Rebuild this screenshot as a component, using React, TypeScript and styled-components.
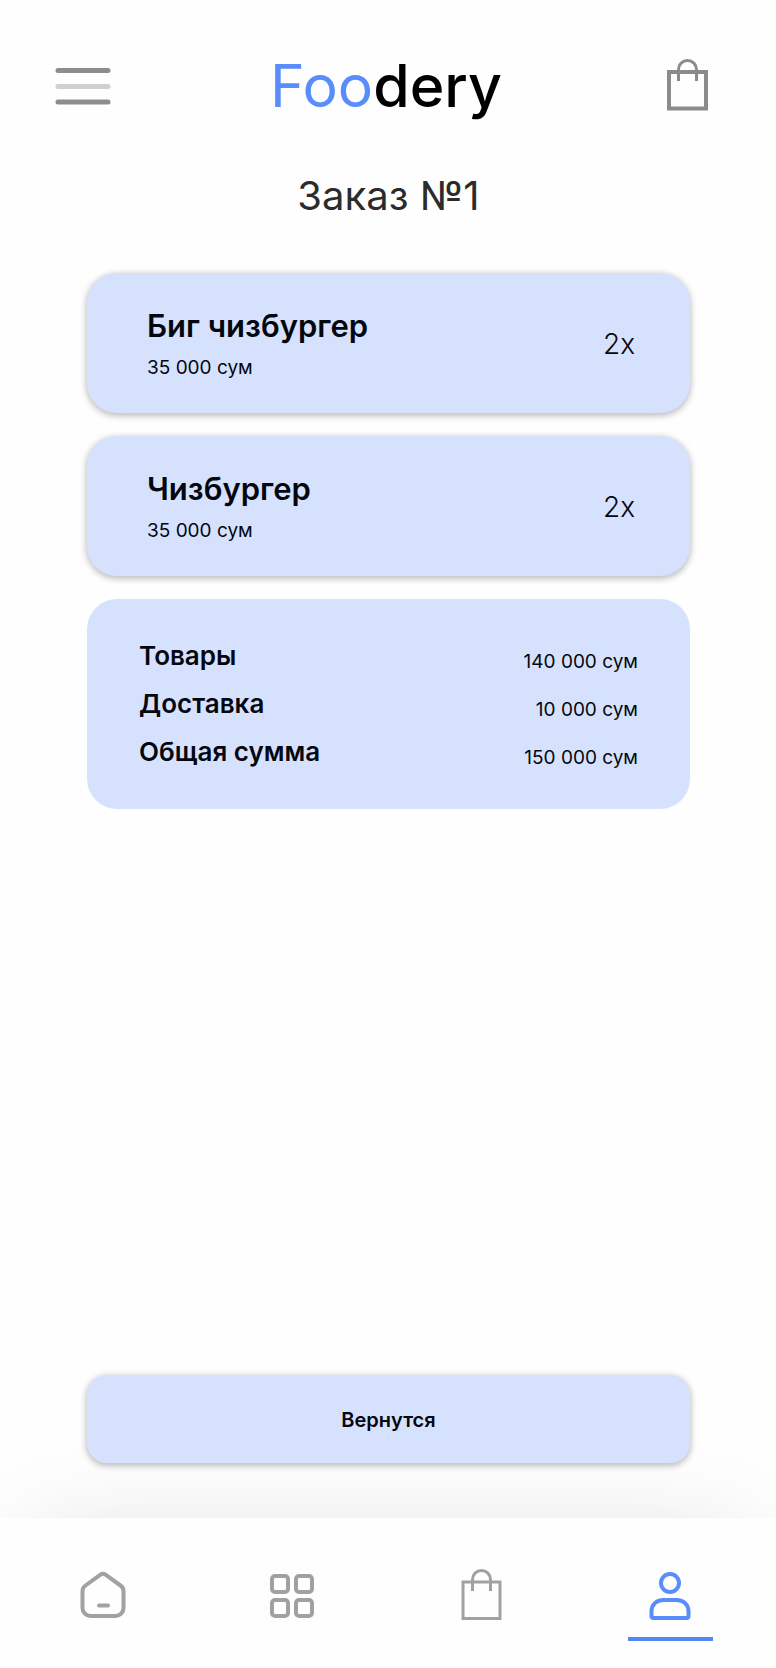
import React from 'react';
import styled, { createGlobalStyle } from 'styled-components';

const GlobalStyle = createGlobalStyle`
  * { box-sizing: border-box; }
  body {
    margin: 0;
    background: #fefefe;
    color: #05070f;
    font-family: Inter, "Noto Sans", sans-serif;
  }
`;

const Page = styled.div`
  display: flex;
  flex-direction: column;
  min-height: 100vh;
`;

const Header = styled.header`
  display: flex;
  align-items: center;
  justify-content: space-between;
  height: 172px;
  padding: 0 58px 0 52px;
`;

const IconButton = styled.button`
  display: flex;
  padding: 0;
  border: 0;
  background: none;
  color: #8b8b8b;
  cursor: pointer;
`;

const Logo = styled.a`
  color: #000;
  font-size: 59px;
  font-weight: 500;
  line-height: 72px;
  text-decoration: none;
`;

const LogoAccent = styled.span`
  color: #588dfb;
  font-weight: 400;
`;

const Main = styled.main`
  display: flex;
  flex: 1;
  flex-direction: column;
  padding: 0 86px 55px 87px;
`;

const Title = styled.h1`
  margin: 0 0 53px;
  color: #2b2b2b;
  font-size: 40px;
  font-weight: 400;
  line-height: 48px;
  text-align: center;
`;

const OrderList = styled.ul`
  display: flex;
  flex-direction: column;
  gap: 23px;
  margin: 0 0 23px;
  padding: 0;
  list-style: none;
`;

const OrderCard = styled.li`
  display: flex;
  align-items: center;
  justify-content: space-between;
  height: 140px;
  padding: 2px 55px 0 60px;
  border-radius: 30px;
  background: #d6e2fd;
  box-shadow: 0 2px 6px 1px rgba(0, 0, 0, 0.25);
`;

const ItemName = styled.h2`
  margin: 0 0 12px;
  font-size: 31px;
  font-weight: 600;
  line-height: 36px;
`;

const Price = styled.p`
  margin: 0;
  font-size: 19px;
  line-height: 24px;
`;

const Quantity = styled.span`
  font-size: 28px;
  font-weight: 300;
  line-height: 36px;
`;

const Summary = styled.dl`
  display: flex;
  flex-direction: column;
  gap: 12px;
  margin: 0 0 auto;
  padding: 39px 52px;
  border-radius: 30px;
  background: #d6e2fd;
`;

const SummaryRow = styled.div`
  display: flex;
  align-items: flex-end;
  justify-content: space-between;
  height: 36px;
`;

const SummaryLabel = styled.dt`
  font-size: 26px;
  font-weight: 600;
  line-height: 36px;
`;

const SummaryValue = styled.dd`
  margin: 0;
  font-size: 19px;
  line-height: 24px;
`;

const BackButton = styled.button`
  position: relative;
  z-index: 1;
  height: 88px;
  padding: 2px 0 0;
  border: 0;
  border-radius: 20px;
  background: #d6e2fd;
  box-shadow: 0 2px 6px 1px rgba(0, 0, 0, 0.25);
  color: inherit;
  font-family: inherit;
  font-size: 20px;
  font-weight: 600;
  line-height: 24px;
  cursor: pointer;
`;

const TabBar = styled.nav`
  display: flex;
  height: 150px;
  padding: 0 11px 0 9px;
  background: #fefefe;
  box-shadow: 0 -10px 100px -30px rgba(0, 0, 0, 0.13);
`;

const Tab = styled.a<{ $active?: boolean }>`
  display: flex;
  flex: 1;
  flex-direction: column;
  align-items: center;
  padding-top: 48px;
  color: ${({ $active }) => ($active ? '#588dfb' : '#a1a1a1')};

  &::after {
    width: 85px;
    height: 4px;
    margin-top: 11px;
    background: ${({ $active }) => ($active ? '#5288f0' : 'transparent')};
    content: '';
  }
`;

const BagIcon = ({ stroke = 3 }: { stroke?: number }) => (
  <svg width="60" height="60" viewBox="0 0 60 60" fill="none" stroke="currentColor" aria-hidden="true">
    <path d="M11 16h37v36.500h-37z" strokeWidth={stroke} />
    <path d="M20.500 25V13.500a9 9 0 0 1 18 0V25" strokeWidth="3" />
  </svg>
);

const MenuIcon = () => (
  <svg width="62" height="60" viewBox="0 0 62 60" fill="none" strokeLinecap="round" strokeWidth="5" aria-hidden="true">
    <path d="M6 14.5h50M6 46h50" stroke="#8d8d8d" />
    <path d="M6 30.5h50" stroke="#d0d0d0" />
  </svg>
);

const HomeIcon = () => (
  <svg width="60" height="60" viewBox="0 0 60 60" fill="none" stroke="currentColor" strokeWidth="4" strokeLinecap="round" strokeLinejoin="round" aria-hidden="true">
    <path d="M26.5 8.6 11.500 19.500a7 7 0 0 0-3 6V42a8 8 0 0 0 8 8h25a8 8 0 0 0 8-8V25.500a7 7 0 0 0-3-6L31.500 8.600a4.500 4.500 0 0 0-5 0z" />
    <path d="M25 39.500h9" />
  </svg>
);

const GridIcon = () => (
  <svg width="60" height="60" viewBox="0 0 60 60" fill="none" stroke="currentColor" strokeWidth="4" aria-hidden="true">
    <rect x="9" y="10" width="16" height="16" rx="3" />
    <rect x="33" y="10" width="16" height="16" rx="3" />
    <rect x="9" y="34" width="16" height="16" rx="3" />
    <rect x="33" y="34" width="16" height="16" rx="3" />
  </svg>
);

const UserIcon = () => (
  <svg width="60" height="60" viewBox="0 0 60 60" fill="none" stroke="currentColor" strokeWidth="4" aria-hidden="true">
    <circle cx="29" cy="17" r="9" />
    <path d="M10.500 45.500c0-7 5-11.500 12-11.500h13c7 0 12 4.500 12 11.500V50a2 2 0 0 1-2 2h-33a2 2 0 0 1-2-2z" />
  </svg>
);

const items = [
  { name: 'Биг чизбургер', price: '35 000 сум', quantity: '2x' },
  { name: 'Чизбургер', price: '35 000 сум', quantity: '2x' },
];

const totals = [
  { label: 'Товары', value: '140 000 сум' },
  { label: 'Доставка', value: '10 000 сум' },
  { label: 'Общая сумма', value: '150 000 сум' },
];

export default function App() {
  return (
    <Page>
      <GlobalStyle />
      <Header>
        <IconButton type="button" aria-label="Меню">
          <MenuIcon />
        </IconButton>
        <Logo href="#home">
          <LogoAccent>Foo</LogoAccent>dery
        </Logo>
        <IconButton type="button" aria-label="Корзина">
          <BagIcon stroke={4} />
        </IconButton>
      </Header>
      <Main>
        <Title>Заказ №1</Title>
        <OrderList>
          {items.map((item) => (
            <OrderCard key={item.name}>
              <div>
                <ItemName>{item.name}</ItemName>
                <Price>{item.price}</Price>
              </div>
              <Quantity>{item.quantity}</Quantity>
            </OrderCard>
          ))}
        </OrderList>
        <Summary>
          {totals.map((row) => (
            <SummaryRow key={row.label}>
              <SummaryLabel>{row.label}</SummaryLabel>
              <SummaryValue>{row.value}</SummaryValue>
            </SummaryRow>
          ))}
        </Summary>
        <BackButton type="button">Вернутся</BackButton>
      </Main>
      <TabBar>
        <Tab href="#home" aria-label="Главная">
          <HomeIcon />
        </Tab>
        <Tab href="#categories" aria-label="Категории">
          <GridIcon />
        </Tab>
        <Tab href="#cart" aria-label="Корзина">
          <BagIcon />
        </Tab>
        <Tab href="#profile" aria-label="Профиль" aria-current="page" $active>
          <UserIcon />
        </Tab>
      </TabBar>
    </Page>
  );
}
